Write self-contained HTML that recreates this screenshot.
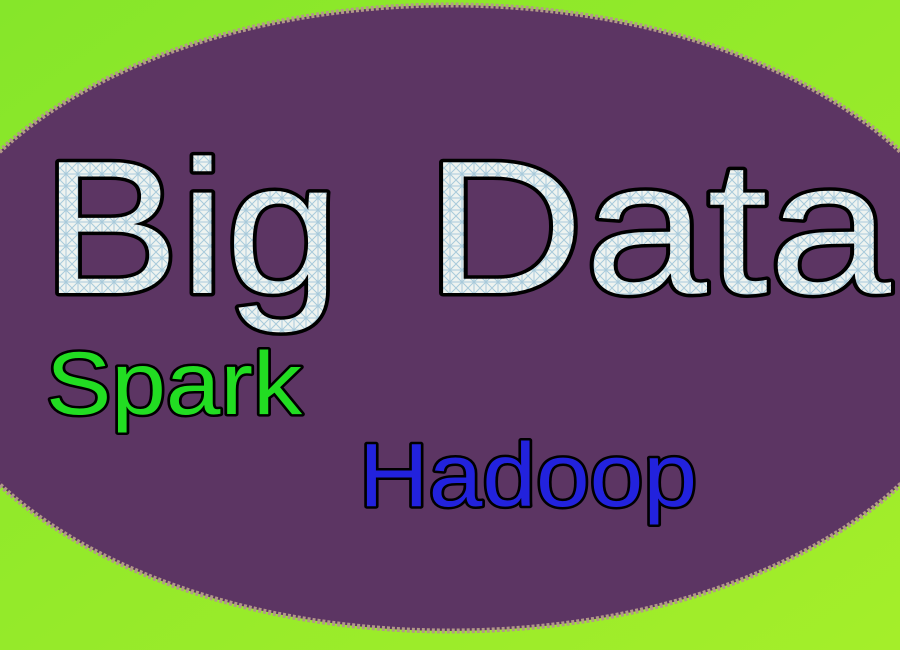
<!DOCTYPE html>
<html><head><style>html,body{margin:0;padding:0;width:900px;height:650px;overflow:hidden}</style></head>
<body>
<svg width="900" height="650" viewBox="0 0 900 650" xmlns="http://www.w3.org/2000/svg">
<defs>
<linearGradient id="bg" x1="0" y1="0" x2="1" y2="1">
<stop offset="0" stop-color="#86e62a"/><stop offset="1" stop-color="#a4ee2a"/>
</linearGradient>
<pattern id="pt" width="12" height="12" patternUnits="userSpaceOnUse">
<rect width="12" height="12" fill="#eef3f0"/>
<path d="M0 6H12M6 0V12M0 0L12 12M12 0L0 12" stroke="#a8cadb" stroke-width="1"/>
</pattern>
</defs>
<rect width="900" height="650" fill="url(#bg)"/>
<ellipse cx="450" cy="318" rx="532" ry="313" fill="#5c3563" stroke="#b39a88" stroke-width="5" stroke-dasharray="3 2"/>
<g font-family="Liberation Sans, sans-serif" stroke="#000" paint-order="stroke" stroke-linejoin="round">
<text x="42" y="293" font-size="190" fill="url(#pt)" stroke-width="7" textLength="298" lengthAdjust="spacingAndGlyphs">Big</text>
<text x="425" y="293" font-size="190" fill="url(#pt)" stroke-width="7" textLength="466" lengthAdjust="spacingAndGlyphs">Data</text>
<text x="46" y="414" font-size="89" fill="#22dd22" stroke-width="5" textLength="256" lengthAdjust="spacingAndGlyphs">Spark</text>
<text x="359" y="506" font-size="90" fill="#2222dd" stroke-width="5" textLength="338" lengthAdjust="spacingAndGlyphs">Hadoop</text>
</g>
</svg>
</body></html>
